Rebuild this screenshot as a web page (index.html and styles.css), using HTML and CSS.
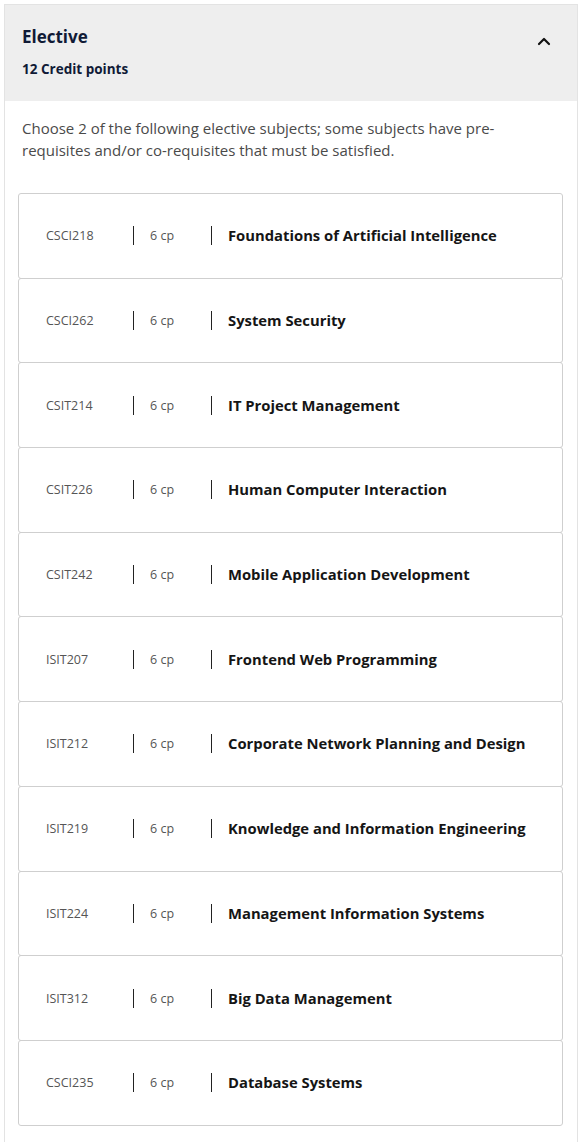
FILE: index.html
```html
<!DOCTYPE html>
<html lang="en">
<head>
<meta charset="utf-8">
<title>Elective</title>
<link rel="stylesheet" href="styles.css">
</head>
<body>
<section class="panel">
  <header class="panel-head">
    <div class="head-text">
      <h2 class="title">Elective</h2>
      <p class="credits">12 Credit points</p>
    </div>
    <svg class="chevron" width="14" height="10" viewBox="0 0 14 10" aria-hidden="true">
      <path d="M2 8 L7 3 L12 8" fill="none" stroke="#111" stroke-width="2.2" stroke-linecap="round" stroke-linejoin="round"/>
    </svg>
  </header>
  <div class="panel-body">
    <p class="desc">Choose 2 of the following elective subjects; some subjects have pre-requisites and/or co-requisites that must be satisfied.</p>
    <ul class="subjects">
      <li class="subject"><span class="code">CSCI218</span><span class="cp">6 cp</span><span class="name">Foundations of Artificial Intelligence</span></li>
      <li class="subject"><span class="code">CSCI262</span><span class="cp">6 cp</span><span class="name">System Security</span></li>
      <li class="subject"><span class="code">CSIT214</span><span class="cp">6 cp</span><span class="name">IT Project Management</span></li>
      <li class="subject"><span class="code">CSIT226</span><span class="cp">6 cp</span><span class="name">Human Computer Interaction</span></li>
      <li class="subject"><span class="code">CSIT242</span><span class="cp">6 cp</span><span class="name">Mobile Application Development</span></li>
      <li class="subject"><span class="code">ISIT207</span><span class="cp">6 cp</span><span class="name">Frontend Web Programming</span></li>
      <li class="subject"><span class="code">ISIT212</span><span class="cp">6 cp</span><span class="name">Corporate Network Planning and Design</span></li>
      <li class="subject"><span class="code">ISIT219</span><span class="cp">6 cp</span><span class="name">Knowledge and Information Engineering</span></li>
      <li class="subject"><span class="code">ISIT224</span><span class="cp">6 cp</span><span class="name">Management Information Systems</span></li>
      <li class="subject"><span class="code">ISIT312</span><span class="cp">6 cp</span><span class="name">Big Data Management</span></li>
      <li class="subject"><span class="code">CSCI235</span><span class="cp">6 cp</span><span class="name">Database Systems</span></li>
    </ul>
  </div>
</section>
</body>
</html>
```

FILE: styles.css
```css
* { box-sizing: border-box; }
html, body { margin: 0; padding: 0; background: #ffffff; }
body {
  font-family: "Open Sans", "DejaVu Sans", sans-serif;
  color: #222;
  padding: 4px 4px 0 4px;
}
.panel {
  border: 1px solid #e3e3e3;
  border-bottom: none;
  background: #fff;
  min-height: 1138px;
}
.panel-head {
  background: #eeeeee;
  height: 96px;
  padding: 22px 26px 0 17px;
  display: flex;
  justify-content: space-between;
  align-items: flex-start;
}
.title {
  margin: 0;
  font-size: 17px;
  font-weight: 700;
  color: #101a36;
  line-height: 20px;
}
.credits {
  margin: 14px 0 0 0;
  font-size: 13.5px;
  font-weight: 700;
  color: #101a36;
  line-height: 16px;
}
.chevron { margin-top: 9px; }
.panel-body {
  padding: 16px 14px 0 13px;
}
.desc {
  margin: 0 0 0 4px;
  font-size: 15px;
  line-height: 22px;
  color: #4a4a4a;
  max-width: 520px;
}
.subjects {
  list-style: none;
  margin: 33px 0 0 0;
  padding: 0;
}
.subject {
  display: flex;
  align-items: center;
  height: 85.7px;
  border: 1px solid #cfcfcf;
  border-radius: 3px;
  margin-top: -1px;
  padding-left: 27px;
}
.code {
  width: 87px;
  font-size: 12.5px;
  color: #555;
}
.cp {
  width: 78px;
  font-size: 12.5px;
  color: #555;
  border-left: 1.5px solid #222;
  padding-left: 16px;
  line-height: 19px;
}
.name {
  border-left: 1.5px solid #222;
  padding-left: 16px;
  line-height: 19px;
  font-size: 14.8px;
  font-weight: 700;
  color: #151515;
}
```
